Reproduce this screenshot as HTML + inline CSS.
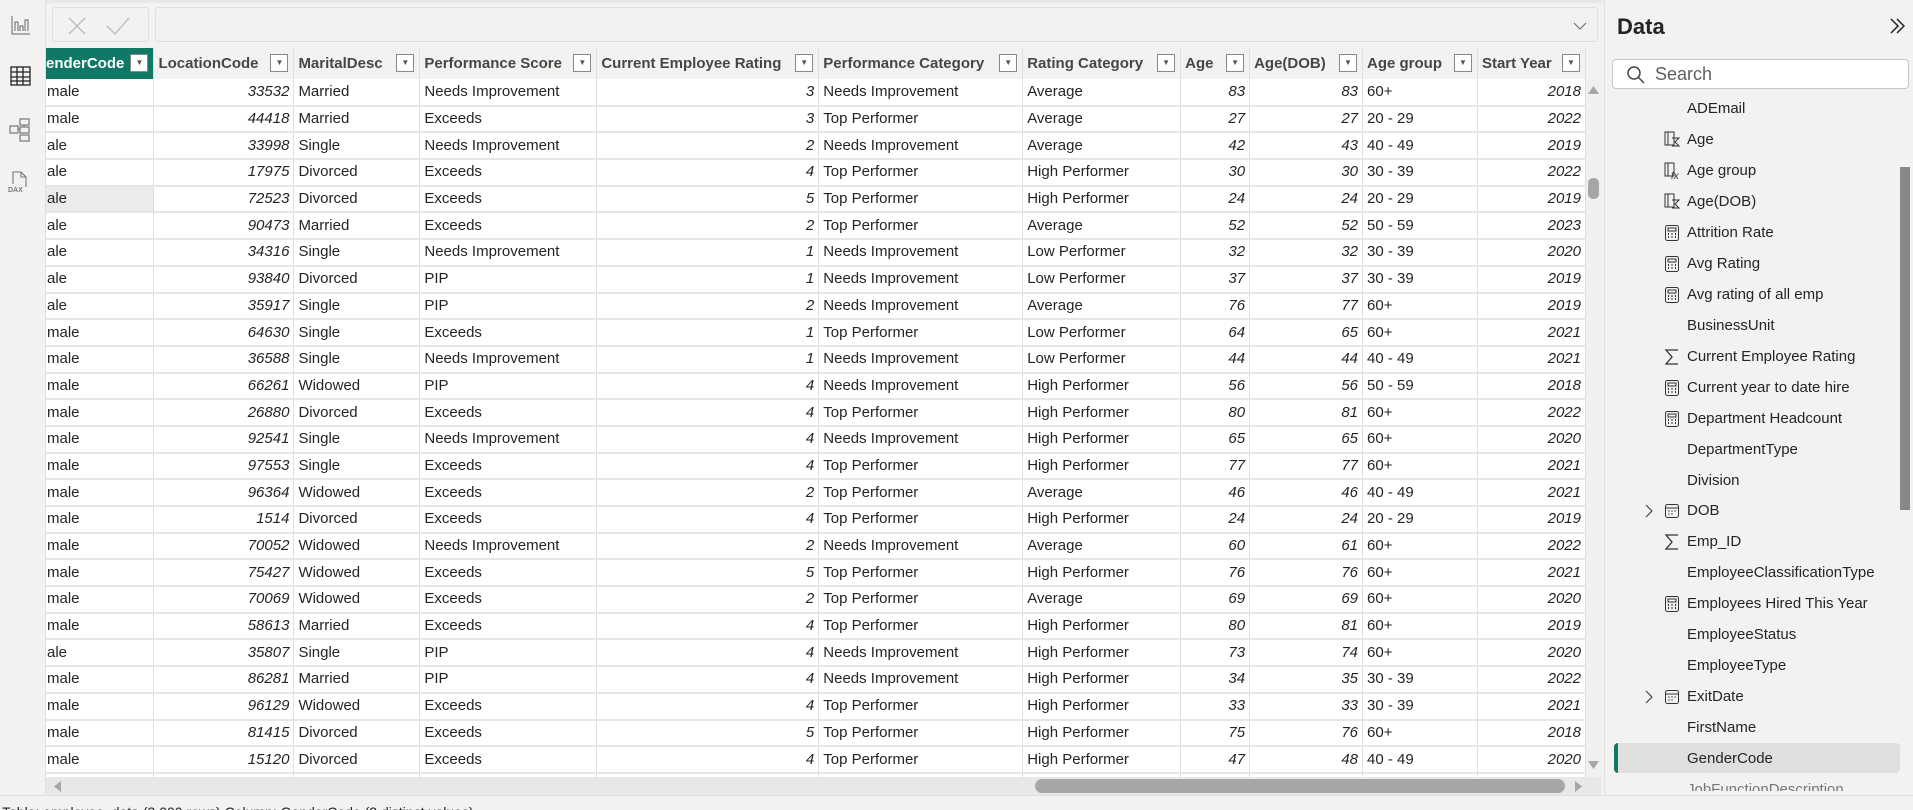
<!DOCTYPE html>
<html><head><meta charset="utf-8"><style>
*{box-sizing:border-box;margin:0;padding:0}
body{width:1913px;height:810px;overflow:hidden;background:#f3f2f1;font-family:"Liberation Sans",sans-serif;color:#252423;position:relative}
.side{position:absolute;left:0;top:0;width:46px;height:796px;background:#f3f2f1;border-right:1px solid #e1dfdd}
.topline{position:absolute;left:0;top:0;width:1913px;height:3px;background:#e8e8e8}
.fbtn{position:absolute;left:52px;top:7px;width:97px;height:35px;border:1px solid #e1dfdd;border-radius:3px;background:#f3f2f1}
.finput{position:absolute;left:155px;top:7px;width:1443px;height:35px;border:1px solid #e1dfdd;border-radius:3px;background:#f3f2f1}
.grid{position:absolute;left:46px;top:48px;width:1540px;height:729px;overflow:hidden;background:#fff}
table{border-collapse:collapse;table-layout:fixed;position:absolute;left:0;top:0}
td,th{height:26.7px;font-size:15px;white-space:nowrap;overflow:hidden;border-right:1px solid #e1dfdd;border-bottom:2px solid #e6e6e6;padding:0 4px;line-height:24px}
th{height:31px;background:#f3f2f1;font-weight:bold;text-align:left;color:#484644;position:relative;padding-right:26px;border-bottom:none}
th .f{position:absolute;right:5px;top:6px;width:18px;height:18px;border:1px solid #8a8886;background:#fff;font-size:8px;line-height:16px;text-align:center;color:#555}
th.g{background:#117865;color:#fff;padding-left:0}
td.n{text-align:right;font-style:italic}
td.c0{padding-left:1px}
.vs{position:absolute;left:1586px;top:79px;width:15px;height:698px;background:#f0f0f0}
.hs{position:absolute;left:46px;top:777px;width:1555px;height:18px;background:#e8e8e8}
.panel{position:absolute;left:1604px;top:0;width:309px;height:796px;background:#f3f2f1;border-left:1px solid #e1dfdd;overflow:hidden}
.title{position:absolute;left:12px;top:14px;font-size:22px;font-weight:bold;color:#252423}
.search{position:absolute;left:7px;top:59px;width:297px;height:30px;background:#fff;border:1px solid #c8c6c4;border-radius:4px}
.search span{position:absolute;left:42px;top:4px;font-size:18px;color:#605e5c}
.item{position:absolute;left:82px;font-size:15px;color:#252423;height:20px;line-height:20px}
.ic{position:absolute;left:-23px;top:1px;width:16px;height:18px}
.status{position:absolute;left:0;top:795px;width:1913px;height:15px;overflow:hidden;background:#f3f2f1;border-top:1px solid #e1dfdd;font-size:14px;padding:8px 0 0 2px;line-height:16px;color:#252423}
</style></head><body>
<div class="topline"></div>
<div class="side">
<svg style="position:absolute;left:11px;top:15px" width="20" height="20" viewBox="0 0 20 20" fill="none" stroke="#666" stroke-width="1"><path d="M1 1v18h18M4 16V7h3v9M9 16V11h3v5M14 16V5h3v11"/></svg>
<svg style="position:absolute;left:10px;top:66px" width="21" height="20" viewBox="0 0 21 20" fill="none" stroke="#222" stroke-width="1.3"><rect x="1" y="1" width="19" height="18"/><path d="M1 6h19M1 11h19M1 15h19M7 1v18M13 1v18"/></svg>
<svg style="position:absolute;left:9px;top:118px" width="22" height="24" viewBox="0 0 22 24" fill="none" stroke="#777" stroke-width="1.2"><rect x="1" y="8" width="8" height="7"/><rect x="11" y="1" width="9" height="6"/><rect x="11" y="9" width="9" height="6"/><rect x="11" y="17" width="9" height="6"/><path d="M9 11h2M15 7v2"/></svg>
<svg style="position:absolute;left:7px;top:170px" width="26" height="24" viewBox="0 0 26 24" fill="none" stroke="#777" stroke-width="1.1"><path d="M6 14V2h8l5 5v10M14 2v5h5"/><text x="1" y="22" font-size="7" fill="#777" stroke="none" font-family="Liberation Sans" font-weight="bold">DAX</text></svg>
</div>
<div class="fbtn">
<svg style="position:absolute;left:14px;top:8px" width="20" height="20" viewBox="0 0 20 20" stroke="#bbb" stroke-width="1.3"><path d="M2 2l16 16M18 2L2 18"/></svg>
<svg style="position:absolute;left:52px;top:8px" width="26" height="20" viewBox="0 0 26 20" fill="none" stroke="#bbb" stroke-width="1.3"><path d="M2 10l8 8L24 2"/></svg>
</div>
<div class="finput"><svg style="position:absolute;right:10px;top:14px" width="14" height="8" viewBox="0 0 14 8" fill="none" stroke="#666"><path d="M1 1l6 6 6-6"/></svg></div>
<div class="grid">
<table>
<colgroup><col style="width:108px"><col style="width:140px"><col style="width:126px"><col style="width:177px"><col style="width:222px"><col style="width:204px"><col style="width:158px"><col style="width:69px"><col style="width:113px"><col style="width:115px"><col style="width:108px"></colgroup>
<tr><th class="g">enderCode<span class="f">▼</span></th><th>LocationCode<span class="f">▼</span></th><th>MaritalDesc<span class="f">▼</span></th><th>Performance Score<span class="f">▼</span></th><th>Current Employee Rating<span class="f">▼</span></th><th>Performance Category<span class="f">▼</span></th><th>Rating Category<span class="f">▼</span></th><th>Age<span class="f">▼</span></th><th>Age(DOB)<span class="f">▼</span></th><th>Age group<span class="f">▼</span></th><th>Start Year<span class="f">▼</span></th></tr>
<tr><td class="c0">male</td><td class="n">33532</td><td>Married</td><td>Needs Improvement</td><td class="n">3</td><td>Needs Improvement</td><td>Average</td><td class="n">83</td><td class="n">83</td><td>60+</td><td class="n">2018</td></tr>
<tr><td class="c0">male</td><td class="n">44418</td><td>Married</td><td>Exceeds</td><td class="n">3</td><td>Top Performer</td><td>Average</td><td class="n">27</td><td class="n">27</td><td>20 - 29</td><td class="n">2022</td></tr>
<tr><td class="c0">ale</td><td class="n">33998</td><td>Single</td><td>Needs Improvement</td><td class="n">2</td><td>Needs Improvement</td><td>Average</td><td class="n">42</td><td class="n">43</td><td>40 - 49</td><td class="n">2019</td></tr>
<tr><td class="c0">ale</td><td class="n">17975</td><td>Divorced</td><td>Exceeds</td><td class="n">4</td><td>Top Performer</td><td>High Performer</td><td class="n">30</td><td class="n">30</td><td>30 - 39</td><td class="n">2022</td></tr>
<tr><td class="c0" style="background:#ebebeb">ale</td><td class="n">72523</td><td>Divorced</td><td>Exceeds</td><td class="n">5</td><td>Top Performer</td><td>High Performer</td><td class="n">24</td><td class="n">24</td><td>20 - 29</td><td class="n">2019</td></tr>
<tr><td class="c0">ale</td><td class="n">90473</td><td>Married</td><td>Exceeds</td><td class="n">2</td><td>Top Performer</td><td>Average</td><td class="n">52</td><td class="n">52</td><td>50 - 59</td><td class="n">2023</td></tr>
<tr><td class="c0">ale</td><td class="n">34316</td><td>Single</td><td>Needs Improvement</td><td class="n">1</td><td>Needs Improvement</td><td>Low Performer</td><td class="n">32</td><td class="n">32</td><td>30 - 39</td><td class="n">2020</td></tr>
<tr><td class="c0">ale</td><td class="n">93840</td><td>Divorced</td><td>PIP</td><td class="n">1</td><td>Needs Improvement</td><td>Low Performer</td><td class="n">37</td><td class="n">37</td><td>30 - 39</td><td class="n">2019</td></tr>
<tr><td class="c0">ale</td><td class="n">35917</td><td>Single</td><td>PIP</td><td class="n">2</td><td>Needs Improvement</td><td>Average</td><td class="n">76</td><td class="n">77</td><td>60+</td><td class="n">2019</td></tr>
<tr><td class="c0">male</td><td class="n">64630</td><td>Single</td><td>Exceeds</td><td class="n">1</td><td>Top Performer</td><td>Low Performer</td><td class="n">64</td><td class="n">65</td><td>60+</td><td class="n">2021</td></tr>
<tr><td class="c0">male</td><td class="n">36588</td><td>Single</td><td>Needs Improvement</td><td class="n">1</td><td>Needs Improvement</td><td>Low Performer</td><td class="n">44</td><td class="n">44</td><td>40 - 49</td><td class="n">2021</td></tr>
<tr><td class="c0">male</td><td class="n">66261</td><td>Widowed</td><td>PIP</td><td class="n">4</td><td>Needs Improvement</td><td>High Performer</td><td class="n">56</td><td class="n">56</td><td>50 - 59</td><td class="n">2018</td></tr>
<tr><td class="c0">male</td><td class="n">26880</td><td>Divorced</td><td>Exceeds</td><td class="n">4</td><td>Top Performer</td><td>High Performer</td><td class="n">80</td><td class="n">81</td><td>60+</td><td class="n">2022</td></tr>
<tr><td class="c0">male</td><td class="n">92541</td><td>Single</td><td>Needs Improvement</td><td class="n">4</td><td>Needs Improvement</td><td>High Performer</td><td class="n">65</td><td class="n">65</td><td>60+</td><td class="n">2020</td></tr>
<tr><td class="c0">male</td><td class="n">97553</td><td>Single</td><td>Exceeds</td><td class="n">4</td><td>Top Performer</td><td>High Performer</td><td class="n">77</td><td class="n">77</td><td>60+</td><td class="n">2021</td></tr>
<tr><td class="c0">male</td><td class="n">96364</td><td>Widowed</td><td>Exceeds</td><td class="n">2</td><td>Top Performer</td><td>Average</td><td class="n">46</td><td class="n">46</td><td>40 - 49</td><td class="n">2021</td></tr>
<tr><td class="c0">male</td><td class="n">1514</td><td>Divorced</td><td>Exceeds</td><td class="n">4</td><td>Top Performer</td><td>High Performer</td><td class="n">24</td><td class="n">24</td><td>20 - 29</td><td class="n">2019</td></tr>
<tr><td class="c0">male</td><td class="n">70052</td><td>Widowed</td><td>Needs Improvement</td><td class="n">2</td><td>Needs Improvement</td><td>Average</td><td class="n">60</td><td class="n">61</td><td>60+</td><td class="n">2022</td></tr>
<tr><td class="c0">male</td><td class="n">75427</td><td>Widowed</td><td>Exceeds</td><td class="n">5</td><td>Top Performer</td><td>High Performer</td><td class="n">76</td><td class="n">76</td><td>60+</td><td class="n">2021</td></tr>
<tr><td class="c0">male</td><td class="n">70069</td><td>Widowed</td><td>Exceeds</td><td class="n">2</td><td>Top Performer</td><td>Average</td><td class="n">69</td><td class="n">69</td><td>60+</td><td class="n">2020</td></tr>
<tr><td class="c0">male</td><td class="n">58613</td><td>Married</td><td>Exceeds</td><td class="n">4</td><td>Top Performer</td><td>High Performer</td><td class="n">80</td><td class="n">81</td><td>60+</td><td class="n">2019</td></tr>
<tr><td class="c0">ale</td><td class="n">35807</td><td>Single</td><td>PIP</td><td class="n">4</td><td>Needs Improvement</td><td>High Performer</td><td class="n">73</td><td class="n">74</td><td>60+</td><td class="n">2020</td></tr>
<tr><td class="c0">male</td><td class="n">86281</td><td>Married</td><td>PIP</td><td class="n">4</td><td>Needs Improvement</td><td>High Performer</td><td class="n">34</td><td class="n">35</td><td>30 - 39</td><td class="n">2022</td></tr>
<tr><td class="c0">male</td><td class="n">96129</td><td>Widowed</td><td>Exceeds</td><td class="n">4</td><td>Top Performer</td><td>High Performer</td><td class="n">33</td><td class="n">33</td><td>30 - 39</td><td class="n">2021</td></tr>
<tr><td class="c0">male</td><td class="n">81415</td><td>Divorced</td><td>Exceeds</td><td class="n">5</td><td>Top Performer</td><td>High Performer</td><td class="n">75</td><td class="n">76</td><td>60+</td><td class="n">2018</td></tr>
<tr><td class="c0">male</td><td class="n">15120</td><td>Divorced</td><td>Exceeds</td><td class="n">4</td><td>Top Performer</td><td>High Performer</td><td class="n">47</td><td class="n">48</td><td>40 - 49</td><td class="n">2020</td></tr>
<tr><td></td><td></td><td></td><td></td><td></td><td></td><td></td><td></td><td></td><td></td><td></td></tr>
</table>
</div>
<div class="vs">
<svg style="position:absolute;left:2px;top:6px" width="11" height="9"><path d="M0 9L5.5 1 11 9z" fill="#a6a6a6"/></svg>
<div style="position:absolute;left:2px;top:99px;width:11px;height:21px;border-radius:5px;background:#a6a6a6"></div>
<svg style="position:absolute;left:2px;top:682px" width="11" height="9"><path d="M0 0L5.5 8 11 0z" fill="#a6a6a6"/></svg>
</div>
<div class="hs">
<svg style="position:absolute;left:7px;top:4px" width="8" height="11"><path d="M8 0L1 5.5 8 11z" fill="#a6a6a6"/></svg>
<div style="position:absolute;left:989px;top:2px;width:530px;height:14px;border-radius:7px;background:#a6a6a6"></div>
<svg style="position:absolute;left:1529px;top:4px" width="8" height="11"><path d="M0 0L7 5.5 0 11z" fill="#a6a6a6"/></svg>
</div>
<div class="panel">
<div class="title">Data</div>
<svg style="position:absolute;left:284px;top:17px" width="16" height="18" viewBox="0 0 16 18" fill="none" stroke="#252423" stroke-width="1.5"><path d="M2 2l7 7-7 7M8 2l7 7-7 7"/></svg>
<div class="search"><svg style="position:absolute;left:13px;top:5px" width="20" height="20" viewBox="0 0 20 20" fill="none" stroke="#444" stroke-width="1.5"><circle cx="8" cy="8" r="6"/><path d="M12.5 12.5L18 18"/></svg><span>Search</span></div>
<div style="position:absolute;left:295px;top:167px;width:10px;height:343px;background:#8a8886"></div>
<div style="position:absolute;left:9px;top:743px;width:286px;height:30px;background:#e1dfdd;border-radius:4px;border-left:4px solid #117865"></div>
<div class="item" style="top:99px">ADEmail</div>
<div class="item" style="top:130px"><svg class="ic" viewBox="0 0 16 18" fill="none" stroke="#333"><rect x="1" y="1" width="9" height="13"/><path d="M4 1v13M8 7h7l-4 4 4 4H8"/></svg>Age</div>
<div class="item" style="top:161px"><svg class="ic" viewBox="0 0 16 18" fill="none" stroke="#333"><rect x="1" y="1" width="9" height="13"/><path d="M4 1v13"/><text x="7" y="17" font-size="10" font-style="italic" fill="#333" stroke="none">fx</text></svg>Age group</div>
<div class="item" style="top:192px"><svg class="ic" viewBox="0 0 16 18" fill="none" stroke="#333"><rect x="1" y="1" width="9" height="13"/><path d="M4 1v13M8 7h7l-4 4 4 4H8"/></svg>Age(DOB)</div>
<div class="item" style="top:223px"><svg class="ic" viewBox="0 0 16 18" fill="none" stroke="#333"><rect x="1.5" y="1.5" width="13" height="15" rx="2"/><rect x="4" y="4" width="8" height="3"/><path d="M4 10h1M7.5 10h1M11 10h1M4 13h1M7.5 13h1M11 13h1" stroke-width="2"/></svg>Attrition Rate</div>
<div class="item" style="top:254px"><svg class="ic" viewBox="0 0 16 18" fill="none" stroke="#333"><rect x="1.5" y="1.5" width="13" height="15" rx="2"/><rect x="4" y="4" width="8" height="3"/><path d="M4 10h1M7.5 10h1M11 10h1M4 13h1M7.5 13h1M11 13h1" stroke-width="2"/></svg>Avg Rating</div>
<div class="item" style="top:285px"><svg class="ic" viewBox="0 0 16 18" fill="none" stroke="#333"><rect x="1.5" y="1.5" width="13" height="15" rx="2"/><rect x="4" y="4" width="8" height="3"/><path d="M4 10h1M7.5 10h1M11 10h1M4 13h1M7.5 13h1M11 13h1" stroke-width="2"/></svg>Avg rating of all emp</div>
<div class="item" style="top:316px">BusinessUnit</div>
<div class="item" style="top:347px"><svg class="ic" viewBox="0 0 16 18" fill="none" stroke="#333" stroke-width="1.3"><path d="M14 2H2l6 7-6 7h12"/></svg>Current Employee Rating</div>
<div class="item" style="top:378px"><svg class="ic" viewBox="0 0 16 18" fill="none" stroke="#333"><rect x="1.5" y="1.5" width="13" height="15" rx="2"/><rect x="4" y="4" width="8" height="3"/><path d="M4 10h1M7.5 10h1M11 10h1M4 13h1M7.5 13h1M11 13h1" stroke-width="2"/></svg>Current year to date hire</div>
<div class="item" style="top:409px"><svg class="ic" viewBox="0 0 16 18" fill="none" stroke="#333"><rect x="1.5" y="1.5" width="13" height="15" rx="2"/><rect x="4" y="4" width="8" height="3"/><path d="M4 10h1M7.5 10h1M11 10h1M4 13h1M7.5 13h1M11 13h1" stroke-width="2"/></svg>Department Headcount</div>
<div class="item" style="top:440px">DepartmentType</div>
<div class="item" style="top:471px">Division</div>
<div class="item" style="top:501px"><svg style="position:absolute;left:-42px;top:3px" width="9" height="14" fill="none" stroke="#333"><path d="M1 1l6 6-6 6"/></svg><svg class="ic" viewBox="0 0 16 18" fill="none" stroke="#333"><rect x="1.5" y="2.5" width="13" height="13" rx="2"/><path d="M1.5 6h13"/><path d="M4.5 9h1M7.5 9h1M10.5 9h1M4.5 12h1M7.5 12h1" stroke-width="1.5"/></svg>DOB</div>
<div class="item" style="top:532px"><svg class="ic" viewBox="0 0 16 18" fill="none" stroke="#333" stroke-width="1.3"><path d="M14 2H2l6 7-6 7h12"/></svg>Emp_ID</div>
<div class="item" style="top:563px">EmployeeClassificationType</div>
<div class="item" style="top:594px"><svg class="ic" viewBox="0 0 16 18" fill="none" stroke="#333"><rect x="1.5" y="1.5" width="13" height="15" rx="2"/><rect x="4" y="4" width="8" height="3"/><path d="M4 10h1M7.5 10h1M11 10h1M4 13h1M7.5 13h1M11 13h1" stroke-width="2"/></svg>Employees Hired This Year</div>
<div class="item" style="top:625px">EmployeeStatus</div>
<div class="item" style="top:656px">EmployeeType</div>
<div class="item" style="top:687px"><svg style="position:absolute;left:-42px;top:3px" width="9" height="14" fill="none" stroke="#333"><path d="M1 1l6 6-6 6"/></svg><svg class="ic" viewBox="0 0 16 18" fill="none" stroke="#333"><rect x="1.5" y="2.5" width="13" height="13" rx="2"/><path d="M1.5 6h13"/><path d="M4.5 9h1M7.5 9h1M10.5 9h1M4.5 12h1M7.5 12h1" stroke-width="1.5"/></svg>ExitDate</div>
<div class="item" style="top:718px">FirstName</div>
<div class="item" style="top:749px">GenderCode</div>
<div class="item" style="top:780px;height:11px;overflow:hidden;line-height:20px;color:#777">JobFunctionDescription</div>
</div>
<div class="status">Table: employee_data (3,000 rows) Column: GenderCode (2 distinct values)</div>
</body></html>
